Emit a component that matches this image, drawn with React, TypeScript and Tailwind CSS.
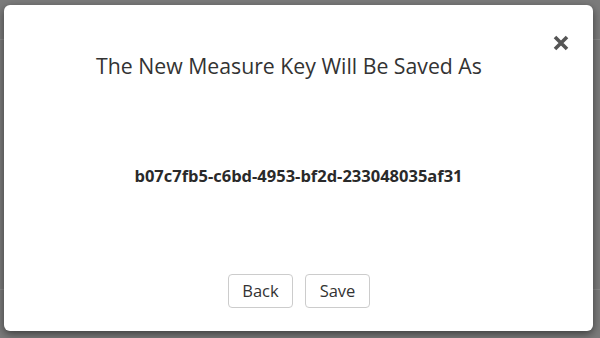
import React from "react";

function CloseIcon() {
  return (
    <svg viewBox="0 0 16 16" className="w-[16px] h-[16px]" fill="none">
      <path d="M2 2 L14 14 M14 2 L2 14" stroke="#555" strokeWidth="3.6" strokeLinecap="butt" />
    </svg>
  );
}

export default function App() {
  return (
    <div
      className="relative w-[600px] h-[338px] overflow-hidden bg-[#7b7b7b]"
      style={{ fontFamily: '"Open Sans", "Liberation Sans", sans-serif' }}
    >
      {/* page behind the overlay */}
      <div className="h-[40px] border-b border-[#8a8a8a]" />
      <div className="h-[250px] border-b border-[#8a8a8a]" />

      {/* modal */}
      <div className="absolute left-[4px] top-[5px] w-[589px] h-[326px] bg-white rounded-[6px] shadow-[0_3px_9px_rgba(0,0,0,0.5)] flex flex-col">
        <div className="relative pt-[43px] pr-[19px] text-center">
          <h2 className="text-[21.25px] leading-[36px] text-[#333] font-normal">The New Measure Key Will Be Saved As</h2>
          <button className="absolute right-[24px] top-[30px] p-0">
            <CloseIcon />
          </button>
        </div>
        <div className="mt-[80px] text-center text-[16.5px] leading-[24px] font-bold text-[#2a2a2a]">
          b07c7fb5-c6bd-4953-bf2d-233048035af31
        </div>
        <div className="mt-auto mb-[23px] flex justify-center gap-[12px] pl-[1px]">
          <button className="w-[65px] h-[34px] border border-[#ccc] rounded-[4px] bg-white text-[16.5px] text-[#333]">Back</button>
          <button className="w-[65px] h-[34px] border border-[#ccc] rounded-[4px] bg-white text-[16.5px] text-[#333]">Save</button>
        </div>
      </div>
    </div>
  );
}
